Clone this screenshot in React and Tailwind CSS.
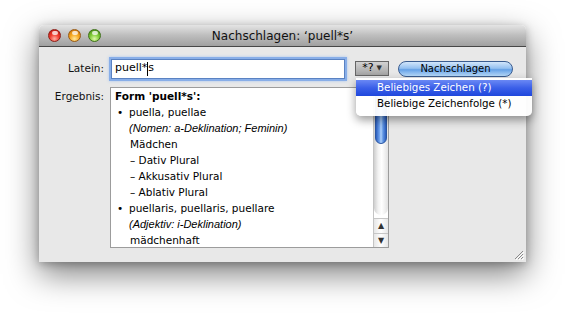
import React from "react";

const lines = [
  { kind: "bullet", text: "puella, puellae" },
  { kind: "italic", text: "(Nomen: a-Deklination; Feminin)" },
  { kind: "plain", text: "Mädchen" },
  { kind: "plain", text: "– Dativ Plural" },
  { kind: "plain", text: "– Akkusativ Plural" },
  { kind: "plain", text: "– Ablativ Plural" },
  { kind: "bullet", text: "puellaris, puellaris, puellare" },
  { kind: "italic", text: "(Adjektiv: i-Deklination)" },
  { kind: "plain", text: "mädchenhaft" },
];

function Light({ color }) {
  const styles = {
    red: "border-[#8e1f18] bg-[radial-gradient(circle_at_50%_80%,#ffb0a4_0%,#f03a2c_45%,#b3150c_100%)]",
    orange: "border-[#9a5a12] bg-[radial-gradient(circle_at_50%_80%,#ffe9a0_0%,#f7a81e_45%,#c06a08_100%)]",
    green: "border-[#3f7218] bg-[radial-gradient(circle_at_50%_80%,#e0fbaa_0%,#80cc38_45%,#3e8012_100%)]",
  };
  return (
    <div className={`relative w-[13px] h-[13px] rounded-full border ${styles[color]}`}>
      <div className="absolute left-[2.5px] top-[1px] w-[6px] h-[4px] rounded-full bg-white/75" />
    </div>
  );
}

function Line({ line }) {
  if (line.kind === "bullet") {
    return (
      <div className="flex">
        <span className="w-[14px] pl-[2px]">•</span>
        <span>{line.text}</span>
      </div>
    );
  }
  if (line.kind === "italic") {
    return (
      <div className="pl-[14px] italic text-[11px] font-['Liberation_Sans',sans-serif]">
        {line.text}
      </div>
    );
  }
  return <div className="pl-[15px] whitespace-pre">{line.text}</div>;
}

export default function App() {
  return (
    <div className="w-[575px] h-[326px] bg-white pl-[39px] pt-[25px] font-['DejaVu_Sans',sans-serif] text-[10.5px] text-black">
      <div className="w-[487px] h-[237px] flex flex-col rounded-t-[5px] shadow-[0_12px_32px_rgba(0,0,0,0.5),0_2px_8px_rgba(0,0,0,0.25)]">
        {/* title bar */}
        <div className="h-[22px] grid grid-cols-[1fr_auto_1fr] items-center rounded-t-[5px] border-b border-[#474747] bg-[linear-gradient(180deg,#e4e4e4,#bdbdbd_50%,#a0a0a0)]">
          <div className="flex items-center gap-[7px] pl-[9px]">
            <Light color="red" />
            <Light color="orange" />
            <Light color="green" />
          </div>
          <div className="text-[12px] text-[#111]">Nachschlagen: ‘puell*s’</div>
          <div />
        </div>

        {/* content */}
        <div className="relative flex-1 bg-[#e8e8e8]">
          <div className="flex items-center h-[23px] mt-[10px]">
            <div className="w-[65px] text-right text-[#111]">Latein:</div>
            <div className="ml-[7px] w-[234px] h-[20px] flex items-center border border-[#5a82c2] bg-white pl-[3px] text-[11px] shadow-[0_0_0_2px_#88aee8,0_0_3px_2px_#a9c6ee]">
              <span>puell*</span>
              <span className="w-px h-[14px] bg-black" />
              <span>s</span>
            </div>
            <div className="relative ml-[10px]">
              <div className="w-[34px] h-[15px] flex items-center justify-center gap-[3px] border border-[#666] bg-[linear-gradient(180deg,#d2d2d2,#a4a4a4)] text-[11px]">
                <span>*?</span>
                <span className="text-[7px] text-[#333]">▼</span>
              </div>
              {/* menu */}
              <div className="absolute left-[1px] top-[17px] z-10 w-[176px] pt-[2px] pb-[4px] rounded-b-[5px] bg-white/95 shadow-[0_4px_10px_rgba(0,0,0,0.4)] text-[10.3px]">
                <div className="h-[16px] flex items-center pl-[21px] text-white bg-[linear-gradient(180deg,#6a88f4,#3a5fe8_50%,#1f47dc)]">
                  Beliebiges Zeichen (?)
                </div>
                <div className="h-[16px] flex items-center pl-[21px] text-black">
                  Beliebige Zeichenfolge (*)
                </div>
              </div>
            </div>
            <div className="ml-[9px] w-[115px] h-[16px] flex items-center justify-center rounded-full border border-[#3a5c90] bg-[linear-gradient(180deg,#d2e6fb,#94c0f0_45%,#64a0e6_55%,#b8dcfb)] text-[10px]">
              Nachschlagen
            </div>
          </div>

          <div className="flex items-start mt-[7px]">
            <div className="w-[65px] text-right text-[#111] mt-[1px] leading-[16px]">Ergebnis:</div>
            <div className="ml-[6px] w-[279px] h-[161px] flex border border-[#9c9c9c] bg-white">
              <div className="flex-1 pl-[4px] leading-[16px]">
                <div className="font-bold">Form 'puell*s':</div>
                {lines.map((l, i) => (
                  <Line key={i} line={l} />
                ))}
              </div>
              {/* scrollbar */}
              <div className="w-[15px] flex flex-col border-l border-[#c4c4c4]">
                <div className="flex-1 flex flex-col rounded-b-full bg-[linear-gradient(90deg,#cfcfcf,#f2f2f2_30%,#ffffff_55%,#e2e2e2)] pt-[1px]">
                  <div className="mx-[1px] h-[55px] rounded-full border border-[#2a56a2] bg-[linear-gradient(90deg,#2a5cbc,#6ea2ee_35%,#aed0fa_50%,#5f95e4_70%,#2a5cbc)]" />
                </div>
                <div className="h-[15px] mt-[3px] flex items-center justify-center border-t border-[#c6c6c6] bg-[linear-gradient(90deg,#e6e6e6,#ffffff_50%,#e6e6e6)] text-[8px] text-[#333]">
                  ▲
                </div>
                <div className="h-[14px] flex items-center justify-center border-t border-[#c6c6c6] bg-[linear-gradient(90deg,#e6e6e6,#ffffff_50%,#e6e6e6)] text-[8px] text-[#333]">
                  ▼
                </div>
              </div>
            </div>
          </div>

          {/* resize grip */}
          <svg className="absolute right-[2px] bottom-[2px]" width="11" height="11" viewBox="0 0 11 11">
            <path d="M10 2 L2 10 M10 5 L5 10 M10 8 L8 10" stroke="#8a8a8a" strokeWidth="1" />
            <path d="M11 3 L3 11 M11 6 L6 11 M11 9 L9 11" stroke="#ffffff" strokeWidth="1" />
          </svg>
        </div>
      </div>
    </div>
  );
}
